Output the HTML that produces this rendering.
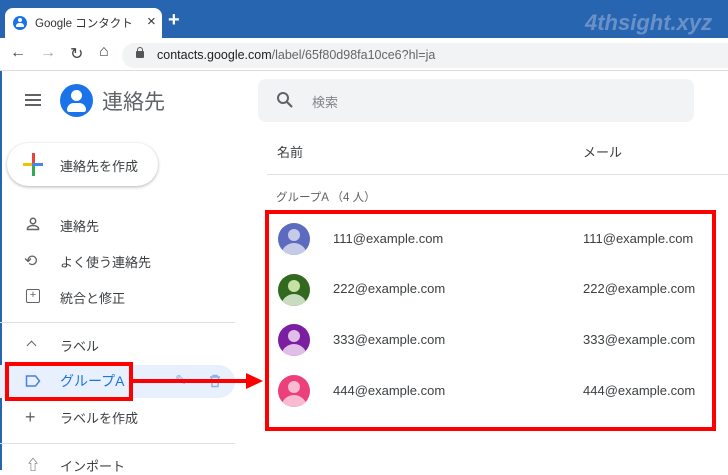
<!DOCTYPE html>
<html><head><meta charset="utf-8"><style>
*{margin:0;padding:0;box-sizing:border-box}
body{width:728px;height:470px;overflow:hidden;position:relative;background:#fff;font-family:"Liberation Sans","Noto Sans CJK JP",sans-serif;color:#3c4043}
.a{position:absolute}
.t{font-size:13px;white-space:nowrap}
</style></head><body>
<div class="a" style="left:0;top:0;width:728px;height:38px;background:#2865b0"></div>
<div class="a" style="left:0;top:0;width:2px;height:470px;background:#2865b0"></div>
<div class="a" style="left:5px;top:8px;width:157px;height:32px;background:#fff;border-radius:8px 8px 0 0"></div>
<div class="a" style="left:13px;top:16px;width:14px;height:14px;border-radius:50%;background:#1a73e8"></div>
<div class="a" style="left:18px;top:18px;width:4px;height:4px;border-radius:50%;background:#fff"></div>
<div class="a" style="left:16px;top:23px;width:8px;height:4px;border-radius:4px 4px 1px 1px;background:#fff"></div>
<div class="a t" style="left:35px;top:15px;font-size:11.5px;color:#333">Google コンタクト</div>
<div class="a" style="left:147px;top:13px;font-size:15px;color:#333">×</div>
<div class="a" style="left:168px;top:9px;font-size:20px;color:#fff;font-weight:bold">+</div>
<div class="a" style="left:585px;top:10px;font-size:22px;color:rgba(150,175,215,0.6);font-style:italic;font-weight:bold">4thsight.xyz</div>
<div class="a" style="left:0;top:38px;width:728px;height:33px;background:#fff;border-bottom:1px solid #ddd"></div>
<div class="a" style="left:10px;top:44px;font-size:16px;color:#444">←</div>
<div class="a" style="left:40px;top:44px;font-size:16px;color:#aaa">→</div>
<div class="a" style="left:70px;top:44px;font-size:16px;color:#444">↻</div>
<div class="a" style="left:99px;top:43px;font-size:16px;color:#444">⌂</div>
<div class="a" style="left:122px;top:43px;width:620px;height:25px;background:#f1f3f4;border-radius:13px"></div>
<div class="a" style="left:136px;top:51px;width:8px;height:7px;background:#555;border-radius:1px"></div>
<div class="a" style="left:137px;top:47px;width:6px;height:6px;border:1.5px solid #555;border-bottom:none;border-radius:3px 3px 0 0"></div>
<div class="a t" style="left:157px;top:48px;font-size:12.5px;color:#202124">contacts.google.com<span style="color:#666">/label/65f80d98fa10ce6?hl=ja</span></div>

<div class="a" style="left:25px;top:94px;width:16px;height:2px;background:#5f6368;box-shadow:0 5px 0 #5f6368,0 10px 0 #5f6368"></div>
<div class="a" style="left:60px;top:84px;width:33px;height:33px;border-radius:50%;background:#1a73e8"></div>
<div class="a" style="left:71px;top:90px;width:11px;height:11px;border-radius:50%;background:#fff"></div>
<div class="a" style="left:67px;top:103px;width:19px;height:9px;border-radius:9px 9px 3px 3px;background:#fff"></div>
<div class="a" style="left:102px;top:86px;font-size:21px;color:#5f6368">連絡先</div>
<div class="a" style="left:258px;top:79px;width:436px;height:43px;background:#f1f3f4;border-radius:8px"></div>
<svg class="a" style="left:276px;top:91px" width="18" height="18" viewBox="0 0 18 18"><circle cx="7" cy="7" r="5" fill="none" stroke="#5f6368" stroke-width="2"/><path d="M11 11l5 5" stroke="#5f6368" stroke-width="2.2"/></svg>
<div class="a t" style="left:312px;top:92px;color:#80868b">検索</div>

<div class="a" style="left:7px;top:143px;width:151px;height:43px;border-radius:22px;background:#fff;box-shadow:0 1px 3px rgba(0,0,0,.3)"></div>
<div class="a" style="left:23px;top:163px;width:9px;height:3px;background:#fbbc04"></div>
<div class="a" style="left:32px;top:163px;width:11px;height:3px;background:#4285f4"></div>
<div class="a" style="left:32px;top:153px;width:3px;height:10px;background:#ea4335"></div>
<div class="a" style="left:32px;top:166px;width:3px;height:10px;background:#34a853"></div>
<div class="a t" style="left:60px;top:156px">連絡先を作成</div>

<svg class="a" style="left:26px;top:217px" width="14" height="14" viewBox="0 0 14 14" fill="none" stroke="#5f6368" stroke-width="1.5"><circle cx="7" cy="4" r="2.7"/><path d="M1.5 12.5v-1c0-2 3.5-3 5.5-3s5.5 1 5.5 3v1z"/></svg>
<div class="a t" style="left:60px;top:216px">連絡先</div>
<div class="a" style="left:24px;top:251px;font-size:16px;color:#5f6368">⟲</div>
<div class="a t" style="left:60px;top:252px">よく使う連絡先</div>
<div class="a" style="left:26px;top:289px;width:14px;height:14px;border:1.5px solid #5f6368;border-radius:2px;font-size:11px;line-height:10px;text-align:center;color:#5f6368">+</div>
<div class="a t" style="left:60px;top:288px">統合と修正</div>
<div class="a" style="left:0;top:322px;width:235px;height:1px;background:#e0e0e0"></div>
<div class="a" style="left:28px;top:342px;width:7px;height:7px;border-left:1.5px solid #5f6368;border-top:1.5px solid #5f6368;transform:rotate(45deg)"></div>
<div class="a t" style="left:60px;top:336px">ラベル</div>
<div class="a" style="left:0;top:365px;width:235px;height:33px;background:#e8f0fe;border-radius:0 17px 17px 0"></div>
<svg class="a" style="left:25px;top:374px" width="16" height="14" viewBox="0 0 16 14"><path d="M1.5 2h9l4 5-4 5h-9z" fill="none" stroke="#4c7de0" stroke-width="1.5"/></svg>
<div class="a t" style="left:60px;top:371px;color:#1a73e8;font-size:14px">グループA</div>
<div class="a" style="left:175px;top:372px;font-size:14px;color:#8ab0e8">✎</div>
<svg class="a" style="left:209px;top:374px" width="12" height="14" viewBox="0 0 12 14" fill="none" stroke="#8ab0e8" stroke-width="1.4"><path d="M1 3h10M4 3V1.5h4V3M2.5 3l.5 9.5h6L9.5 3"/></svg>
<div class="a" style="left:5px;top:362px;width:128px;height:39px;border:4px solid #f00"></div>
<div class="a" style="left:133px;top:379px;width:114px;height:4px;background:#f00"></div>
<div class="a" style="left:246px;top:373px;width:0;height:0;border-left:17px solid #f00;border-top:8px solid transparent;border-bottom:8px solid transparent"></div>
<div class="a" style="left:25px;top:407px;font-size:18px;color:#5f6368">+</div>
<div class="a t" style="left:60px;top:408px">ラベルを作成</div>
<div class="a" style="left:0;top:443px;width:235px;height:1px;background:#e0e0e0"></div>
<div class="a" style="left:26px;top:455px;font-size:14px;color:#5f6368">⇧</div>
<div class="a t" style="left:60px;top:456px">インポート</div>

<div class="a t" style="left:277px;top:142px">名前</div>
<div class="a t" style="left:583px;top:142px">メール</div>
<div class="a" style="left:267px;top:174px;width:461px;height:1px;background:#e0e0e0"></div>
<div class="a t" style="left:276px;top:189px;font-size:11.5px;color:#5f6368">グループA （4 人）</div>

<div class="a" style="left:278px;top:223px;width:32px;height:32px;border-radius:50%;background:#5c6bc0;overflow:hidden"><div class="a" style="left:10px;top:6px;width:12px;height:12px;border-radius:50%;background:#c5cae9"></div><div class="a" style="left:3px;top:20px;width:26px;height:16px;border-radius:13px 13px 0 0;background:#c5cae9"></div></div>
<div class="a t" style="left:333px;top:231px">111@example.com</div><div class="a t" style="left:583px;top:231px">111@example.com</div>
<div class="a" style="left:278px;top:274px;width:32px;height:32px;border-radius:50%;background:#33691e;overflow:hidden"><div class="a" style="left:10px;top:6px;width:12px;height:12px;border-radius:50%;background:#c5e1a5"></div><div class="a" style="left:3px;top:20px;width:26px;height:16px;border-radius:13px 13px 0 0;background:#c8dcc0"></div></div>
<div class="a t" style="left:333px;top:281px">222@example.com</div><div class="a t" style="left:583px;top:281px">222@example.com</div>
<div class="a" style="left:278px;top:324px;width:32px;height:32px;border-radius:50%;background:#7b1fa2;overflow:hidden"><div class="a" style="left:10px;top:6px;width:12px;height:12px;border-radius:50%;background:#e1bee7"></div><div class="a" style="left:3px;top:20px;width:26px;height:16px;border-radius:13px 13px 0 0;background:#e1bee7"></div></div>
<div class="a t" style="left:333px;top:332px">333@example.com</div><div class="a t" style="left:583px;top:332px">333@example.com</div>
<div class="a" style="left:278px;top:375px;width:32px;height:32px;border-radius:50%;background:#ec407a;overflow:hidden"><div class="a" style="left:10px;top:6px;width:12px;height:12px;border-radius:50%;background:#f8bbd0"></div><div class="a" style="left:3px;top:20px;width:26px;height:16px;border-radius:13px 13px 0 0;background:#f8bbd0"></div></div>
<div class="a t" style="left:333px;top:383px">444@example.com</div><div class="a t" style="left:583px;top:383px">444@example.com</div>
<div class="a" style="left:265px;top:210px;width:451px;height:221px;border:4px solid #f00"></div>
</body></html>
